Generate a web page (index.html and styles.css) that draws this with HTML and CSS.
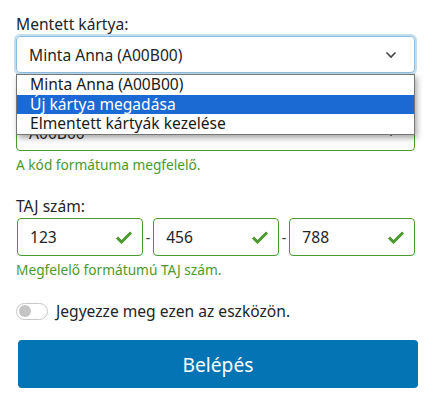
FILE: index.html
```html
<!DOCTYPE html>
<html lang="hu">
<head>
<meta charset="utf-8">
<link rel="stylesheet" href="styles.css">
</head>
<body>
<form class="form">
  <div class="field">
    <label class="label">Mentett kártya:</label>
    <div class="select-wrap">
      <div class="select focus">
        <span>Minta Anna (A00B00)</span>
        <svg class="chev" width="12" height="8" viewBox="0 0 12 8"><path d="M1.5 1.5 6 6l4.5-4.5" fill="none" stroke="#444" stroke-width="1.6"/></svg>
      </div>
      <ul class="menu">
        <li>Minta Anna (A00B00)</li>
        <li class="active">Új kártya megadása</li>
        <li>Elmentett kártyák kezelése</li>
      </ul>
    </div>
    <div class="select valid">
      <span>A00B00</span>
      <svg class="chev" width="12" height="8" viewBox="0 0 12 8"><path d="M1.5 1.5 6 6l4.5-4.5" fill="none" stroke="#444" stroke-width="1.6"/></svg>
    </div>
    <div class="feedback">A kód formátuma megfelelő.</div>
  </div>

  <div class="field taj">
    <label class="label">TAJ szám:</label>
    <div class="taj-row">
      <div class="input valid"><span>123</span><svg class="check" width="18" height="14" viewBox="0 0 18 14"><path d="M2 7.5l4.5 4.5L16 2.5" fill="none" stroke="#4a9a2e" stroke-width="3"/></svg></div>
      <span class="dash">-</span>
      <div class="input valid"><span>456</span><svg class="check" width="18" height="14" viewBox="0 0 18 14"><path d="M2 7.5l4.5 4.5L16 2.5" fill="none" stroke="#4a9a2e" stroke-width="3"/></svg></div>
      <span class="dash">-</span>
      <div class="input valid"><span>788</span><svg class="check" width="18" height="14" viewBox="0 0 18 14"><path d="M2 7.5l4.5 4.5L16 2.5" fill="none" stroke="#4a9a2e" stroke-width="3"/></svg></div>
    </div>
    <div class="feedback">Megfelelő formátumú TAJ szám.</div>
  </div>

  <div class="switch-row">
    <span class="switch"><span class="knob"></span></span>
    <span class="switch-label">Jegyezze meg ezen az eszközön.</span>
  </div>

  <button type="button" class="btn">Belépés</button>
</form>
</body>
</html>
```

FILE: styles.css
```css
* { box-sizing: border-box; }
html, body { margin: 0; background: #fff; }
body {
  font-family: "Noto Sans", "Open Sans", sans-serif;
  color: #212529;
  font-size: 15.6px;
}
.form {
  padding: 13px 31px 0 16px;
  display: flex;
  flex-direction: column;
}
.label {
  display: block;
  font-size: 15.6px;
  line-height: 22px;
  margin-bottom: 1px;
}
.select-wrap { position: relative; }
.select {
  height: 37px;
  border: 1px solid #ced4da;
  border-radius: 4px;
  display: flex;
  align-items: center;
  justify-content: space-between;
  padding: 0 17px 0 12px;
  font-size: 15.6px;
}
.select.focus {
  border-color: #8bbfe2;
  box-shadow: 0 0 0 2px #c3ddee;
}
.select.valid {
  border-color: #4a9a2e;
  margin-top: 41px;
}
.menu {
  position: absolute;
  left: 0;
  right: 0;
  top: 38px;
  margin: 0;
  padding: 0;
  list-style: none;
  background: #fff;
  border: 1px solid #767676;
  box-shadow: 2px 3px 6px rgba(0,0,0,.35);
  z-index: 2;
}
.menu li {
  height: 19.5px;
  line-height: 19px;
  padding-left: 13px;
  font-size: 15.6px;
  color: #1a1a1a;
}
.menu li.active { background: #1b69d3; color: #fff; }
.feedback {
  color: #4a9a2e;
  font-size: 13.7px;
  line-height: 18px;
  margin-top: 5px;
}
.taj { margin-top: 21px; }
.taj-row {
  display: flex;
  align-items: center;
  gap: 3px;
  margin-left: 1px;
}
.input {
  flex: 1;
  height: 38px;
  border: 1px solid #4a9a2e;
  border-radius: 4px;
  display: flex;
  align-items: center;
  justify-content: space-between;
  padding: 0 9px 0 12px;
  font-size: 15.6px;
}
.dash { font-size: 14px; color: #333; }
.switch-row {
  display: flex;
  align-items: center;
  gap: 8px;
  margin-top: 21px;
}
.switch {
  width: 32px;
  height: 17px;
  border: 1px solid #c8c8c8;
  border-radius: 9px;
  display: flex;
  align-items: center;
  padding-left: 2px;
}
.knob {
  width: 12px;
  height: 12px;
  border-radius: 50%;
  background: #c4c4c4;
}
.switch-label { font-size: 15.6px; }
.btn {
  margin: 18px -3px 0 2px;
  height: 48px;
  border: 0;
  border-radius: 4px;
  background: #0474b4;
  color: #fff;
  font-family: inherit;
  font-size: 19.2px;
}
```
